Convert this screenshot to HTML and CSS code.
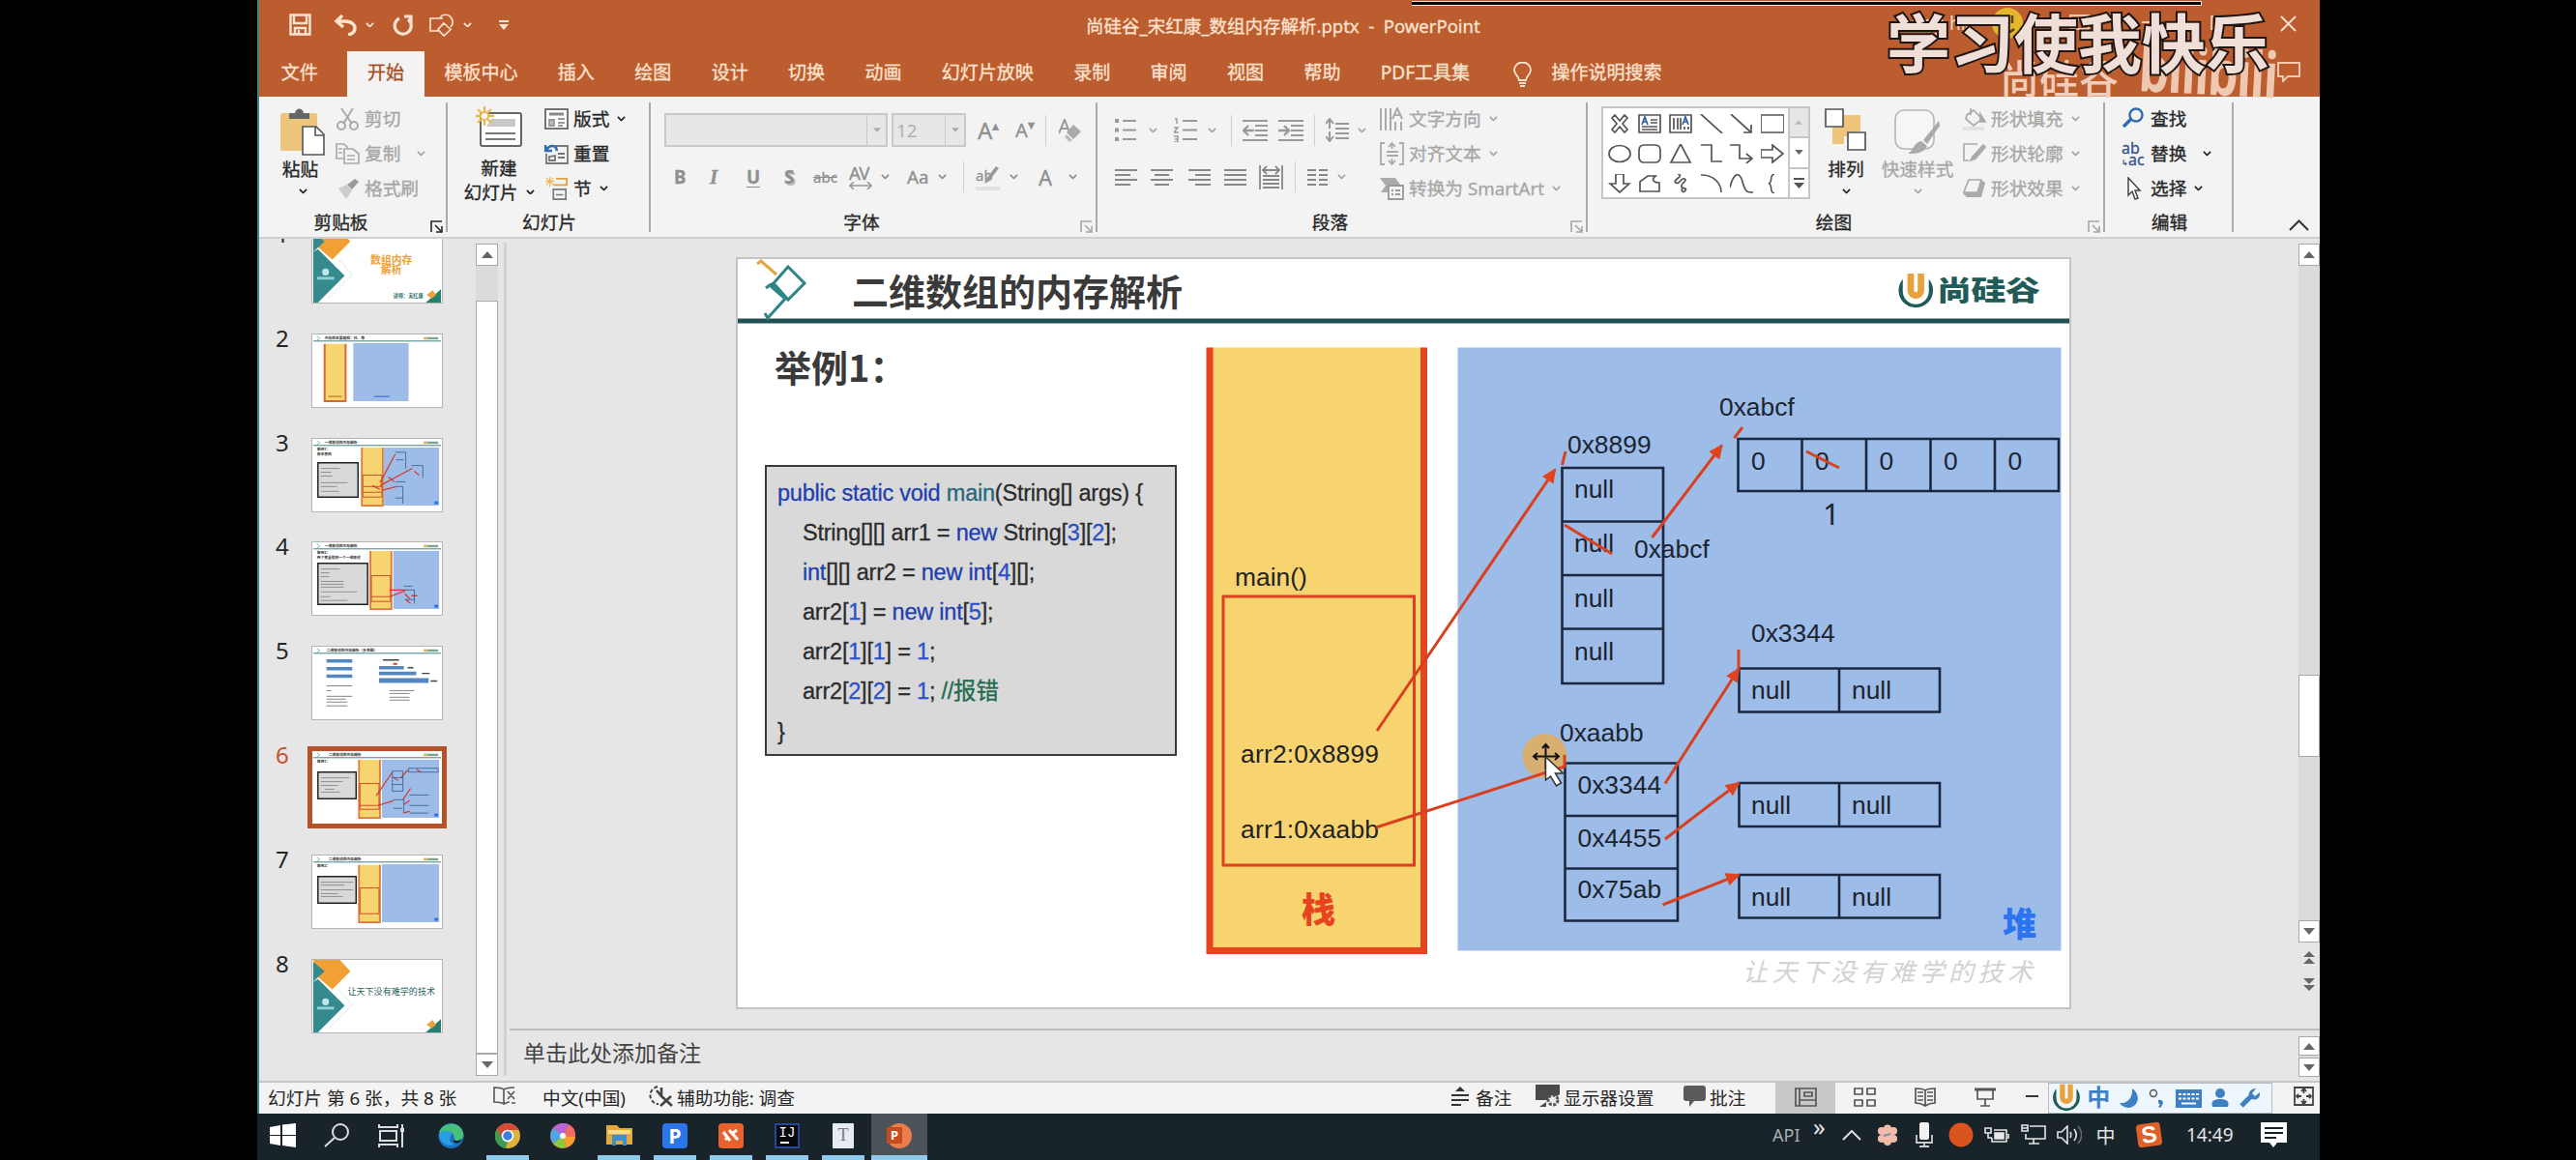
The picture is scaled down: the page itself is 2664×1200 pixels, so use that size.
FILE: index.html
```html
<!DOCTYPE html>
<html lang="zh-CN">
<head>
  <meta charset="UTF-8" />
  <title>尚硅谷_宋红康_数组内存解析.pptx - PowerPoint</title>
  <link rel="stylesheet" href="styles.css">
</head>
<body>
  <!-- shared symbols -->
  <svg class="defs" width="0" height="0">
    <symbol id="chev" viewBox="0 0 10 6"><path d="M1 1l4 4 4-4" fill="none" stroke="currentColor" stroke-width="2"/></symbol>
    <symbol id="launch" viewBox="0 0 13 13"><path d="M1 12V1h11M5 5l6 6M12 6v6H6" fill="none" stroke="currentColor" stroke-width="1.6"/></symbol>
    <symbol id="up" viewBox="0 0 12 7"><path d="M0 7l6-7 6 7z" fill="#666"/></symbol>
    <symbol id="down" viewBox="0 0 12 7"><path d="M0 0l6 7 6-7z" fill="#666"/></symbol>
    <symbol id="ulogo" viewBox="0 0 40 40">
      <path d="M6 7A18.5 18.5 0 1 0 34 7V20a14 14 0 0 1-28 0z" fill="#215b58"/>
      <path d="M11 1v18a9 9 0 0 0 18 0V1h-7v18a2 2 0 0 1-4 0V1z" fill="#e9a23b"/>
    </symbol>
    <symbol id="thead" viewBox="0 0 134 8">
      <path d="M4 2l3 2-3 2" fill="none" stroke="#7cc0c0"/>
      <path d="M0 6.9H134" stroke="#3f7f80" stroke-width="1"/>
      <path d="M116 4h15" stroke="#79a58c" stroke-width="2.4"/><path d="M116 4h4" stroke="#dcb75f" stroke-width="2.4"/>
    </symbol>
    <symbol id="cover" viewBox="0 0 134 76">
      <path d="M0 0H28L39 12 20 31 5 18z" fill="#f0a035"/>
      <path d="M0 2L12 12 0 23zM0 23L5 20 33 48 5 76H0z" fill="#348a8c"/>
      <path d="M27 31L41 47 16 72" fill="none" stroke="#cfe6e4" stroke-width=".8"/>
      <circle cx="13" cy="44" r="3.6" fill="#bfe6ea"/><path d="M4 50.5h18" stroke="#8fd0d6" stroke-width="3"/>
      <path d="M118 76L134 62V76z" fill="#23806f"/><path d="M119 68l6-5 4 5-5 4z" fill="#e9a23b"/>
    </symbol>
  </svg>

  <div class="screen">
    <div class="window">

      <header class="titlebar">
        <div class="quick">
          <svg class="q-save" width="23" height="23" viewBox="0 0 23 23" fill="none" stroke="#fde3cf" stroke-width="2.4"><path d="M1.5 1.5h20v20h-20zM5 2v8h13V2M6 21v-6h11v6M10 17v4"/></svg>
          <svg width="24" height="22" viewBox="0 0 24 22" fill="none" stroke="#fde3cf" stroke-width="3.4"><path d="M9 1L3 7l7 6M3 7h9c7 0 10 4 10 7s-2 6-7 7"/></svg>
          <svg class="chev"><use href="#chev"/></svg>
          <svg width="22" height="22" viewBox="0 0 22 22" fill="none" stroke="#fde3cf" stroke-width="3.2"><path d="M7 4a8.500 8.500 0 1 0 9 1M12 2h7v8" /></svg>
          <svg width="26" height="24" viewBox="0 0 26 24" fill="none" stroke="#fde3cf" stroke-width="1.7"><path d="M10 18H1V5h13M11 5c2-5 9-5 12 0 2 4 1 7-1 9M15 10l7 6.500-7 6.500-6-6.500z"/></svg>
          <svg class="chev"><use href="#chev"/></svg>
          <svg width="10" height="10" viewBox="0 0 10 10"><path d="M0 1h10" stroke="#fde3cf" stroke-width="2"/><path d="M0 4h10l-5 6z" fill="#fde3cf"/></svg>
        </div>
        <div class="doc-name">尚硅谷_宋红康_数组内存解析.pptx&nbsp; -&nbsp; PowerPoint</div>
        <svg class="close" width="17" height="17" viewBox="0 0 17 17"><path d="M1 1l15 15M16 1L1 16" stroke="#fde3cf" stroke-width="1.800"/></svg>
      </header>

      <nav class="tabs">
        <a class="file">文件</a>
        <a class="active">开始</a>
        <a>模板中心</a>
        <a>插入</a>
        <a>绘图</a>
        <a>设计</a>
        <a>切换</a>
        <a>动画</a>
        <a>幻灯片放映</a>
        <a>录制</a>
        <a>审阅</a>
        <a>视图</a>
        <a>帮助</a>
        <a>PDF工具集</a>
        <svg class="bulb" width="19" height="26" viewBox="0 0 19 26" fill="none" stroke="#fde3cf" stroke-width="1.800"><path d="M6 19c0-4-5-6-5-10.500a8.500 8 0 0 1 17 0C18 13 13 15 13 19zM6 22h7M7 25h5"/></svg>
        <a class="tell">操作说明搜索</a>
        <svg class="note" width="24" height="21" viewBox="0 0 24 21" fill="none" stroke="#f6c8ac" stroke-width="2"><path d="M1 1h22v14H11l-5 5v-5H1z"/></svg>
      </nav>

      <div class="ribbon">
        <section class="group clipboard">
          <div class="tools">
            <div class="big">
              <svg width="46" height="50" viewBox="0 0 46 50"><rect x="0" y="5" width="38" height="39" rx="2" fill="#edc67c"/><path d="M9 11V5h6c1-6 8-6 9 0h6v6z" fill="#666"/><path d="M23 19h14l8 8v21H23z" fill="#fff" stroke="#555" stroke-width="1.600"/><path d="M36 19v9h9" fill="none" stroke="#555" stroke-width="1.600"/></svg>
              <span>粘贴</span>
              <svg class="chev"><use href="#chev"/></svg>
            </div>
            <div class="rows off">
              <div><svg class="ico" viewBox="0 0 25 24" fill="none" stroke="#aaa" stroke-width="2"><path d="M6 1l11 16M18 1L8 17"/><circle cx="6" cy="19" r="4"/><circle cx="19" cy="19" r="4"/></svg><span>剪切</span></div>
              <div><svg class="ico" viewBox="0 0 25 24" fill="none" stroke="#aaa" stroke-width="1.700"><path d="M10 17H1V2h8l3 3v2M9 7h9l6 5v10H9zM3 7h4M3 11h4M12 14h8M12 18h8"/></svg><span>复制</span><svg class="chev far"><use href="#chev"/></svg></div>
              <div><svg class="ico" viewBox="0 0 25 24"><path d="M3 12l8-4 6 6-6 9z" fill="#ccc"/><path d="M12 8l8-6 4 3-7 8z" fill="#999"/></svg><span>格式刷</span></div>
            </div>
          </div>
          <footer><span>剪贴板</span><svg class="launch"><use href="#launch"/></svg></footer>
        </section>

        <section class="group slides">
          <div class="tools">
            <div class="big">
              <svg width="48" height="43" viewBox="0 0 48 43"><rect x="5" y="7" width="42" height="34" rx="2" fill="#fff" stroke="#666" stroke-width="2"/><path d="M16 13h25v8H11" fill="#c8c8c8"/><path d="M10 28h31M10 34h31" stroke="#777" stroke-width="1.800"/><path d="M9 0v20M0 10h19M2 3l14 14M16 3L2 17" stroke="#e9b858" stroke-width="2.400"/><circle cx="9" cy="10" r="4" fill="#fff" stroke="#e9b858" stroke-width="2"/></svg>
              <span>新建</span>
              <span class="two">幻灯片<svg class="chev"><use href="#chev"/></svg></span>
            </div>
            <div class="rows">
              <div><svg class="ico" viewBox="0 0 25 24" fill="none" stroke="#666" stroke-width="1.800"><rect x="1" y="2" width="23" height="20" fill="#fff"/><path d="M5 7h15" stroke="#888" stroke-width="3"/><path d="M5 13h5v6H5z" fill="#bbb" stroke="#999"/><path d="M14 12h7M14 16h7M14 19h5" stroke="#999"/></svg><span>版式</span><svg class="chev"><use href="#chev"/></svg></div>
              <div><svg class="ico" viewBox="0 0 25 24" fill="none" stroke="#777" stroke-width="1.800"><path d="M11 4h13v18H2V12M5 15v4h6v-5zM14 12h7M14 16h7"/><path d="M1 3v6h7M2 8C6 2 12 3 13 9" stroke="#2e6db5" stroke-width="2.600"/></svg><span>重置</span></div>
              <div><svg class="ico" viewBox="0 0 25 26" fill="none" stroke="#777" stroke-width="1.800"><path d="M9 14h14v11H9zM12 20h8"/><path d="M12 2h12v7H9" stroke="#e0a040" stroke-width="2"/><path d="M5 0v11M0 5h10M1 1l8 8M9 1L1 9" stroke="#e9b858" stroke-width="1.200"/></svg><span>节</span><svg class="chev"><use href="#chev"/></svg></div>
            </div>
          </div>
          <footer><span>幻灯片</span></footer>
        </section>

        <section class="group font off">
          <div class="tools">
            <div class="row font-row1">
              <div class="combo name"><i><svg width="8" height="5" viewBox="0 0 12 7"><path d="M0 0h12l-6 7z" fill="#aaa"/></svg></i></div>
              <div class="combo size">12<i><svg width="8" height="5" viewBox="0 0 12 7"><path d="M0 0h12l-6 7z" fill="#aaa"/></svg></i></div>
              <span class="grow">A<sup>▴</sup></span>
              <span class="shrink">A<sup>▾</sup></span>
              <b class="bar"></b>
              <svg width="23" height="24" viewBox="0 0 23 24"><path d="M0 15L6 1l5 13M2 10h7" fill="none" stroke="#999" stroke-width="2"/><path d="M15 6l8 7-8 8-7-7z" fill="#aaa"/><path d="M8 16l6 6-3 2-5-5z" fill="#bbb"/></svg>
            </div>
            <div class="row font-row2">
              <span class="bold">B</span>
              <span class="ital">I</span>
              <span class="und">U</span>
              <span class="shad">S</span>
              <span class="strike">abc</span>
              <span class="av">AV<svg width="24" height="8" viewBox="0 0 24 8" fill="none" stroke="#999" stroke-width="1.600"><path d="M1 4h22M5 0L1 4l4 4M19 0l4 4-4 4"/></svg></span>
              <svg class="chev"><use href="#chev"/></svg>
              <span class="aa">Aa</span>
              <svg class="chev"><use href="#chev"/></svg>
              <b class="bar"></b>
              <span class="mark">ab<svg width="25" height="26" viewBox="0 0 25 26"><path d="M24 2L13 16l-4 2 2-5L21 0z" fill="#999"/><path d="M0 21h25v4H0z" fill="#e2e2e2"/></svg></span>
              <svg class="chev"><use href="#chev"/></svg>
              <span class="fcol">A</span>
              <svg class="chev"><use href="#chev"/></svg>
            </div>
          </div>
          <footer><span>字体</span><svg class="launch"><use href="#launch"/></svg></footer>
        </section>

        <section class="group para off">
          <div class="tools">
            <div class="para-left">
              <div class="row para-row1">
                <svg width="22" height="25" viewBox="0 0 22 25" stroke="#999" stroke-width="2"><path d="M8 3h14M8 12.500h14M8 22h14"/><path d="M0 3h4M0 12.500h4M0 22h4" stroke-width="4"/></svg>
                <svg class="chev"><use href="#chev"/></svg>
                <svg width="24" height="25" viewBox="0 0 24 25" stroke="#999" stroke-width="2" fill="none"><path d="M9 3h15M9 12.500h15M9 22h15"/><path d="M1 1h2v5M0 10h4l-4 5h5M0 19h4v6H0M1 22h3" stroke-width="1.400"/></svg>
                <svg class="chev"><use href="#chev"/></svg>
                <b class="bar"></b>
                <svg width="26" height="22" viewBox="0 0 26 22" stroke="#999" stroke-width="1.900" fill="none"><path d="M0 1h26M13 6h13M13 11h13M13 16h13M0 21h26"/><path d="M1 11h11M6 6l-5 5 5 5" stroke-width="2.400"/></svg>
                <svg width="26" height="22" viewBox="0 0 26 22" stroke="#999" stroke-width="1.900" fill="none"><path d="M0 1h26M13 6h13M13 11h13M13 16h13M0 21h26"/><path d="M0 11h10M6 6l5 5-5 5" stroke-width="2.400"/></svg>
                <b class="bar"></b>
                <svg width="24" height="25" viewBox="0 0 24 25" stroke="#999" stroke-width="2" fill="none"><path d="M10 6h14M10 11h14M10 16h14M10 21h14M4 2v9M0 6l4-5 4 5M4 14v9M0 19l4 5 4-5"/></svg>
                <svg class="chev"><use href="#chev"/></svg>
              </div>
              <div class="row para-row2">
                <svg width="23" height="17" viewBox="0 0 23 17" stroke="#888" stroke-width="2"><path d="M0 1h23M0 6h16M0 11h23M0 16h16"/></svg>
                <svg width="23" height="17" viewBox="0 0 23 17" stroke="#888" stroke-width="2"><path d="M0 1h23M4 6h15M0 11h23M4 16h15"/></svg>
                <svg width="23" height="17" viewBox="0 0 23 17" stroke="#888" stroke-width="2"><path d="M0 1h23M7 6h16M0 11h23M7 16h16"/></svg>
                <svg width="23" height="17" viewBox="0 0 23 17" stroke="#888" stroke-width="2"><path d="M0 1h23M0 6h23M0 11h23M0 16h23"/></svg>
                <svg width="25" height="25" viewBox="0 0 25 25" stroke="#888" stroke-width="1.800" fill="none"><path d="M1 0v25M24 0v25M5 5h15M8 1L4 5l4 4M17 1l4 4-4 4M4 11h17M4 15h17M4 19h17M4 23h17"/></svg>
                <b class="bar"></b>
                <svg width="21" height="17" viewBox="0 0 21 17" stroke="#888" stroke-width="2"><path d="M0 1h9M0 6h9M0 11h9M0 16h9M12 1h9M12 6h9M12 11h9M12 16h9"/></svg>
                <svg class="chev"><use href="#chev"/></svg>
              </div>
            </div>
            <div class="rows">
              <div><svg class="ico" viewBox="0 0 25 24" stroke="#aaa" stroke-width="2" fill="none"><path d="M1 1v23M6 1v23M11 1v23M16 15v9M22 15v9"/><path d="M13 12l5-11 5 11M15 8h6"/></svg><span>文字方向</span><svg class="chev"><use href="#chev"/></svg></div>
              <div><svg class="ico" viewBox="0 0 25 24" stroke="#aaa" stroke-width="1.800" fill="none"><path d="M5 1H1v22h4M20 1h4v22h-4M7 10h12M7 14h12M12.500 1v6M9 5l3.500-4L16 5M12.500 17v6M9 19l3.500 4 3.500-4"/></svg><span>对齐文本</span><svg class="chev"><use href="#chev"/></svg></div>
              <div><svg class="ico" viewBox="0 0 25 24"><path d="M0 1h16l5 7H11v8H1l5-7z" fill="#aaa"/><path d="M9 9h15v14H9z" fill="#f3f3f3" stroke="#999" stroke-width="1.800"/><path d="M12 14h2M16 14h5M12 18h2M16 18h5" stroke="#999" stroke-width="2"/></svg><span>转换为 SmartArt</span><svg class="chev"><use href="#chev"/></svg></div>
            </div>
          </div>
          <footer><span>段落</span><svg class="launch"><use href="#launch"/></svg></footer>
        </section>

        <section class="group draw">
          <div class="tools">
            <div class="gallery">
              <div class="shapes">
                <svg viewBox="0 0 24 20"><path d="M4 4l3-3 5 6 5-6 3 3-5 6 5 6-3 3-5-6-5 6-3-3 5-6z"/></svg>
                <svg viewBox="0 0 24 20"><path d="M1 1h22v18H1zM13 6h7M13 9h7M4 13h16M4 16h16"/><path d="M4 11L7 3l3 8M5 8h4" stroke="#2b5fa8"/></svg>
                <svg viewBox="0 0 24 20"><path d="M1 1h22v18H1zM5 4v12M9 4v12M12 4v12M16 13v3M20 13v3"/><path d="M14 11l3-8 3 8M15 8h4" stroke="#2b5fa8"/></svg>
                <svg viewBox="0 0 24 20"><path d="M1 0l22 20"/></svg>
                <svg viewBox="0 0 24 20"><path d="M1 0l21 19M22 11v8h-8"/></svg>
                <svg viewBox="0 0 24 20"><path d="M0 1h24v18H0z"/></svg>
                <svg viewBox="0 0 24 20"><ellipse cx="12" cy="10" rx="11" ry="8.500"/></svg>
                <svg viewBox="0 0 24 20"><rect x="1" y="1" width="22" height="18" rx="5"/></svg>
                <svg viewBox="0 0 24 20"><path d="M12 0l10 19H2z"/></svg>
                <svg viewBox="0 0 24 20"><path d="M1 1h11v17h11"/></svg>
                <svg viewBox="0 0 24 20"><path d="M0 1h10v14h12M17 10l6 5-6 5"/></svg>
                <svg viewBox="0 0 24 20"><path d="M0 6h12V1l11 9-11 9v-5H0z"/></svg>
                <svg viewBox="0 0 24 20"><path d="M8 0h8v10h6L12 19 2 10h6z"/></svg>
                <svg viewBox="0 0 24 20"><path d="M2 18V8l8-6h8c-6 5 0 7 4 7v9z"/></svg>
                <svg viewBox="0 0 24 20"><path d="M9 0c8 2-6 6-2 9s5-6 9-4-5 5-3 8 6 1 4 4-5 1-3-3"/></svg>
                <svg viewBox="0 0 24 20"><path d="M1 1c14 0 21 9 21 18"/></svg>
                <svg viewBox="0 0 24 20"><path d="M0 14C4-2 10-3 13 8s5 11 11 11"/></svg>
                <svg viewBox="0 0 24 20"><path d="M14 0c-6 1-1 9-6 10 5 1 0 9 6 10"/></svg>
              </div>
              <div class="steps">
                <i class="dim"><svg width="8" height="5" viewBox="0 0 12 7"><path d="M0 7l6-7 6 7z" fill="#bbb"/></svg></i>
                <i><svg width="9" height="5"><use href="#down"/></svg></i>
                <i><svg width="11" height="11" viewBox="0 0 11 11"><path d="M0 1h11" stroke="#555" stroke-width="2"/><path d="M0 5h11l-5.500 6z" fill="#555"/></svg></i>
              </div>
            </div>
            <div class="big arrange">
              <svg width="44" height="45" viewBox="0 0 44 45"><path d="M8 21V7h29v22H20v8H8z" fill="#edc67c"/><path d="M1 1h18v18H1zM24 25h18v18H24z" fill="#fff" stroke="#555" stroke-width="1.700"/></svg>
              <span>排列</span>
              <svg class="chev"><use href="#chev"/></svg>
            </div>
            <div class="big styles off">
              <svg width="48" height="47" viewBox="0 0 48 47"><rect x="1" y="1" width="40" height="40" rx="9" fill="#f6f6f6" stroke="#b5b5b5" stroke-width="1.600"/><path d="M46 12L30 32l4 4 13-19z" fill="#aaa"/><path d="M28 33l6 5c-4 8-12 8-20 8 6-3 6-12 14-13z" fill="#aaa"/></svg>
              <span>快速样式</span>
              <svg class="chev"><use href="#chev"/></svg>
            </div>
            <div class="rows off">
              <div><svg class="ico" viewBox="0 0 25 24" fill="none" stroke="#aaa" stroke-width="1.700"><path d="M9 1v7M5 8l7-5 9 9-9 7-8-7z"/><path d="M19 7l5 8h-5z" fill="#aaa"/><path d="M1 22h22" stroke="#e2e2e2" stroke-width="4"/></svg><span>形状填充</span><svg class="chev"><use href="#chev"/></svg></div>
              <div><svg class="ico" viewBox="0 0 25 24" fill="none" stroke="#aaa" stroke-width="1.700"><path d="M16 2H2v17h5"/><path d="M22 3L11 15l-2 4 5-2L24 5z" fill="#aaa"/></svg><span>形状轮廓</span><svg class="chev"><use href="#chev"/></svg></div>
              <div><svg class="ico" viewBox="0 0 25 24"><path d="M6 3h14l4 3-4 15H5l-4-4z" fill="#aaa"/><path d="M7 3h13l-4 13H2z" fill="#f3f3f3" stroke="#aaa" stroke-width="1.500"/></svg><span>形状效果</span><svg class="chev"><use href="#chev"/></svg></div>
            </div>
          </div>
          <footer><span>绘图</span><svg class="launch off"><use href="#launch"/></svg></footer>
        </section>

        <section class="group edit">
          <div class="tools">
            <div class="rows">
              <div><svg class="ico" viewBox="0 0 25 24" fill="none" stroke="#2e6db5" stroke-width="2.400"><circle cx="15" cy="8" r="6.500"/><path d="M10 12L2 20" stroke-width="3.400"/></svg><span>查找</span></div>
              <div><span class="ico abac">ab<br><em>↳</em>ac</span><span>替换</span><svg class="chev wide"><use href="#chev"/></svg></div>
              <div><svg class="ico" viewBox="0 0 25 24"><path d="M7 1v18l4-4 3 8 3-1-3-8h5z" fill="#fff" stroke="#444" stroke-width="1.500"/></svg><span>选择</span><svg class="chev"><use href="#chev"/></svg></div>
            </div>
          </div>
          <footer><span>编辑</span></footer>
        </section>
        <div class="collapse"><svg width="21" height="12" viewBox="0 0 21 12" fill="none" stroke="#333" stroke-width="2"><path d="M1 11l9.500-9.500L20 11"/></svg></div>
      </div>

      <div class="main">
        <aside class="outline">
          <div class="item"><span>1</span>
            <svg class="thumb" viewBox="0 0 134 76"><use href="#cover" width="134" height="76"/><text class="t-cover" x="60" y="35">数组内存</text><text class="t-cover" x="71" y="46">解析</text><text class="t-author" x="84" y="71">讲师：宋红康</text></svg></div>
          <div class="item"><span>2</span>
            <svg class="thumb" viewBox="0 0 134 76"><use href="#thead" width="134" height="8"/><text class="t-head" x="12" y="5.500">内存的主要结构：栈、堆</text>
              <path d="M12 10V70H34V10" fill="#f7d470" stroke="#cf6a3c" stroke-width="2"/><path d="M42 9H100V70H42z" fill="#9dbce8"/><path d="M16 65h14" stroke="#c98a3c" stroke-width="1.500"/><path d="M64 65h16" stroke="#4a7de0" stroke-width="1.500"/></svg></div>
          <div class="item"><span>3</span>
            <svg class="thumb" viewBox="0 0 134 76"><use href="#thead" width="134" height="8"/><text class="t-head" x="12" y="5.500">一维数组的内存解析</text><text class="t-head" x="4" y="12">举例1：</text><text class="t-head" x="4" y="17">基本使用</text>
              <path d="M5 25H47V61H5z" fill="#d9d9d9" stroke="#222" stroke-width="1.500"/><path d="M8 31h20M8 35h11M8 39h12M8 46h28M8 50h17M8 55h19" stroke="#888" stroke-width=".9"/>
              <path d="M74 9H132V70H74z" fill="#9dbce8"/><path d="M51 9V70H73V9" fill="#f7d470" stroke="#e07838" stroke-width="1.800"/><path d="M52 38h20v23H52zM52 50h20M52 56h20" fill="none" stroke="#c8502a"/>
              <path d="M70 46L86 16M70 49L104 31M72 54l15-4M62 49l8 4M79 40l6 5M106 34l5 4" stroke="#d8382a" stroke-width="1.200"/><path d="M86 14h11v17M87 22h8M103 28h12v13M87 50h7v18M86 45h11M86 62h8" fill="none" stroke="#34598a" stroke-width=".8"/><path d="M127 67h4" stroke="#2b6ff0" stroke-width="3"/></svg></div>
          <div class="item"><span>4</span>
            <svg class="thumb" viewBox="0 0 134 76"><use href="#thead" width="134" height="8"/><text class="t-head" x="12" y="5.500">一维数组的内存解析</text><text class="t-head" x="4" y="12">举例2：</text><text class="t-head" x="4" y="17">两个变量指向一个一维数组</text>
              <path d="M5 22H57V65H5z" fill="#d9d9d9" stroke="#222" stroke-width="1.500"/><path d="M8 28h20M8 32h9M8 36h9M8 41h24M8 44h24M8 47h24M8 52h38M8 57h10M8 61h28" stroke="#888" stroke-width=".9"/>
              <path d="M84 9H132V70H84z" fill="#9dbce8"/><path d="M60 9V70H82V9" fill="#f7d470" stroke="#e07838" stroke-width="1.800"/><path d="M61 35h20v27H61zM61 57h20" fill="none" stroke="#c8502a"/>
              <path d="M80 50h17M80 57l16-6M96 54l5 5M97 60l5 4M103 56h6" stroke="#d8382a" stroke-width="1.300"/><path d="M95 46h9M96 50h10v14M96 60h10" fill="none" stroke="#34598a" stroke-width=".8"/><path d="M127 67h4" stroke="#2b6ff0" stroke-width="3"/></svg></div>
          <div class="item"><span>5</span>
            <svg class="thumb" viewBox="0 0 134 76"><use href="#thead" width="134" height="8"/><text class="t-head" x="14" y="5.500">二维数组的内存解析（补充图）</text>
              <path d="M14 15h27M14 23h27M14 31h27M69 22h26M69 28h39" stroke="#5487bf" stroke-width="3.600"/><path d="M69 35.500h52" stroke="#5487bf" stroke-width="5"/><path d="M73 14h17M99 22h6M114 28h8M123 36h7" stroke="#444" stroke-width="1.500"/><path d="M84 18h4" stroke="#e03020" stroke-width="2"/><path d="M14 41h27M14 46h5M14 52h27M14 55h20M14 58h22M14 62h22M80 46h26M80 49h21M80 53h21M80 56h21" stroke="#777" stroke-width=".9"/></svg></div>
          <div class="item current"><span>6</span>
            <svg class="thumb" viewBox="0 0 134 76"><use href="#thead" width="134" height="8"/><text class="t-head" x="16" y="5.500">二维数组的内存解析</text><text class="t-head" x="4" y="12">举例1：</text>
              <path d="M5 22H45V50H5z" fill="#d9d9d9" stroke="#222" stroke-width="1.500"/><path d="M8 28h30M8 32h23M8 36h18M12 40h10M8 43h20" stroke="#888" stroke-width=".9"/>
              <path d="M72 9H132V70H72z" fill="#9dbce8"/><path d="M48 9V70H70V9" fill="#f7d470" stroke="#e07838" stroke-width="1.800"/><path d="M49 34h20v27H49zM49 57h20" fill="none" stroke="#c8502a"/>
              <path d="M66 47L83 22M68 57l16-5M84 27l5 4M92 28l7-8M94 51l8-12M95 56l6-4M95 65l6-2M108 19l5 3" stroke="#d8382a" stroke-width="1.200"/><path d="M83 21h11v21H83zM83 28h11M83 35h11M100 18h31v4h-31zM84 51h11v14M84 60h9M101 46h20M101 57h20M101 65h20" fill="none" stroke="#34598a" stroke-width=".8"/><path d="M127 67h4" stroke="#2b6ff0" stroke-width="3"/></svg></div>
          <div class="item"><span>7</span>
            <svg class="thumb" viewBox="0 0 134 76"><use href="#thead" width="134" height="8"/><text class="t-head" x="16" y="5.500">二维数组的内存解析</text><text class="t-head" x="4" y="12">举例2：</text>
              <path d="M5 22H45V50H5z" fill="#d9d9d9" stroke="#222" stroke-width="1.500"/><path d="M8 28h34M8 31h25M8 36h34M8 40h18M8 43h23" stroke="#888" stroke-width=".9"/>
              <path d="M72 9H132V70H72z" fill="#9dbce8"/><path d="M48 10V70H70V10" fill="#f7d470" stroke="#e07838" stroke-width="1.800"/><path d="M49 34h20v27H49z" fill="none" stroke="#c8502a"/><path d="M127 67h4" stroke="#2b6ff0" stroke-width="3"/></svg></div>
          <div class="item"><span>8</span>
            <svg class="thumb" viewBox="0 0 134 76"><use href="#cover" width="134" height="76"/><text class="t-end" x="36" y="36">让天下没有难学的技术</text></svg></div>
        </aside>
        <div class="vscroll outline-scroll">
          <i><svg width="12" height="7"><use href="#up"/></svg></i>
          <b></b>
          <i><svg width="12" height="7"><use href="#down"/></svg></i>
        </div>
        <div class="splitter"></div>

        <div class="editor">
          <div class="stage">
            <div class="slide">
              <svg class="diagram" viewBox="763 268 1377 774">
                <defs>
                  <marker id="head" markerUnits="userSpaceOnUse" markerWidth="16" markerHeight="14" refX="13" refY="7" orient="auto"><path d="M0 0l15 7-15 7z" fill="#e0431f"/></marker>
                </defs>
                <!-- header -->
                <path d="M763 332H2140" stroke="#1f5152" stroke-width="5"/>
                <path d="M783 273l4-3 16 14" fill="none" stroke="#e5a443" stroke-width="3"/>
                <path d="M815 276l17 17-17 17-15-17zM792 298l4-3 16 14-19 21M797 293l16 15M791 324l4 7" fill="none" stroke="#2e8585" stroke-width="3"/>
                <text class="s-title" x="881" y="316">二维数组的内存解析</text>
                <text class="s-title" x="801" y="395">举例1：</text>
                <use href="#ulogo" x="1962" y="282" width="38.500" height="38.500"/>
                <text class="s-brand" transform="translate(2003 311) scale(1 .8)" textLength="107">尚硅谷</text>

                <!-- stack -->
                <path d="M1251 359.500H1473V983H1251z" fill="#f7d470"/>
                <path d="M1251 359.500V983.500H1472.500V359.500" fill="none" stroke="#e8431f" stroke-width="7"/>
                <rect x="1265" y="617" width="197.500" height="278" fill="none" stroke="#e0401f" stroke-width="3"/>
                <text class="s-text" x="1277" y="606">main()</text>
                <text class="s-text" x="1283" y="788.500" textLength="143">arr2:0x8899</text>
                <text class="s-text" x="1283" y="867" textLength="143">arr1:0xaabb</text>
                <text class="s-zone stack" x="1346" y="954">栈</text>

                <!-- heap -->
                <rect x="1507.500" y="359.500" width="624" height="624" fill="#9dbce8"/>
                <g class="grid">
                  <path d="M1615.500 484H1720V707H1615.500zM1615 539.500H1720M1615 595H1720M1615 650.500H1720"/>
                  <path d="M1797.500 454H2129V508H1797.500zM1863.500 454V508M1930 454V508M1996.500 454V508M2063 454V508"/>
                  <path d="M1618.500 789.500H1735V952.500H1618.500zM1618 844H1735M1618 898.500H1735"/>
                  <path d="M1798.500 691.500H2006V736.500H1798.500zM1902 691V736"/>
                  <path d="M1798.500 810H2006V855H1798.500zM1902 810V855"/>
                  <path d="M1798.500 905H2006V949.500H1798.500zM1902 905V949"/>
                </g>
                <g class="s-text heap-text">
                  <text x="1621" y="468.500">0x8899</text>
                  <text x="1628" y="515">null</text><text x="1628" y="571">null</text><text x="1628" y="628">null</text><text x="1628" y="683">null</text>
                  <text x="1690" y="576.500">0xabcf</text>
                  <text x="1778" y="429.500">0xabcf</text>
                  <text x="1811" y="486">0</text><text x="1877" y="486">0</text><text x="1943.500" y="486">0</text><text x="2010" y="486">0</text><text x="2076.500" y="486">0</text>
                  <text class="one" x="1885" y="543">1</text>
                  <text x="1811" y="664">0x3344</text>
                  <text x="1811" y="723">null</text><text x="1915" y="723">null</text>
                  <text x="1811" y="841.500">null</text><text x="1915" y="841.500">null</text>
                  <text x="1811" y="937">null</text><text x="1915" y="937">null</text>
                  <text x="1613" y="767">0xaabb</text>
                  <text x="1631.500" y="821">0x3344</text><text x="1631.500" y="875.500">0x4455</text><text x="1631.500" y="929">0x75ab</text>
                </g>
                <text class="s-zone heap" x="2071" y="969">堆</text>
                <text class="s-motto" x="1802" y="1015" textLength="300">让天下没有难学的技术</text>

                <!-- mouse highlight -->
                <circle cx="1597.500" cy="782" r="23" fill="#e2ae5c" fill-opacity=".85"/>
                <!-- references -->
                <g class="refs">
                  <path class="arrow" d="M1424 756L1608 486"/>
                  <path class="arrow" d="M1708.500 556L1780.500 461"/>
                  <path class="arrow" d="M1722 810.500L1798 692"/>
                  <path class="arrow" d="M1722 868L1798 810"/>
                  <path class="arrow" d="M1719.500 936L1798 905"/>
                  <path d="M1423 856L1618 793V781M1619 467L1615.500 481M1802 442L1793.500 453M1798 672V692M1618 543L1667 573M1868 467L1902 484"/>
                </g>
                <path d="M1587 782.500H1611M1598.500 771V796M1595 774l3.500-4 3.500 4M1590 779l-4 3.500 4 3.500M1608 779l4 3.500-4 3.500" fill="none" stroke="#111" stroke-width="2"/>
                <path d="M1598.500 783v24l5-4 6 10 5-3-6-10h8z" fill="#fff" stroke="#333" stroke-width="1.500"/>
              </svg>
              <div class="code"><u>public static void</u> <em>main</em>(String[] args) {
<s></s>String[][] arr1 = <u>new</u> String[<q>3</q>][<q>2</q>];
<s></s><u>int</u>[][] arr2 = <u>new int</u>[<q>4</q>][];
<s></s>arr2[<q>1</q>] = <u>new int</u>[<q>5</q>];
<s></s>arr2[<q>1</q>][<q>1</q>] = <q>1</q>;
<s></s>arr2[<q>2</q>][<q>2</q>] = <q>1</q>; <cite>//报错</cite>
}</div>
            </div>
            <div class="vscroll stage-scroll">
              <i><svg width="12" height="7"><use href="#up"/></svg></i>
              <span><b></b></span>
              <i><svg width="12" height="7"><use href="#down"/></svg></i>
              <em><svg width="12" height="13" viewBox="0 0 12 13"><path d="M0 6l6-6 6 6zM0 13l6-6 6 6z" fill="#666"/></svg></em>
              <em><svg width="12" height="13" viewBox="0 0 12 13"><path d="M0 0l6 6 6-6zM0 7l6 6 6-6z" fill="#666"/></svg></em>
            </div>
          </div>
          <div class="notes">
            <p>单击此处添加备注</p>
            <div class="vscroll">
              <i><svg width="12" height="7"><use href="#up"/></svg></i>
              <i><svg width="12" height="7"><use href="#down"/></svg></i>
            </div>
          </div>
        </div>
      </div>

      <div class="status">
        <div class="st-left">
          <span class="st-page">幻灯片 第 6 张，共 8 张</span>
          <svg width="24" height="20" viewBox="0 0 24 20" fill="none" stroke="#555" stroke-width="1.600"><path d="M11 18V3C8 1 4 1 1 1v15c3 0 7 0 10 2 2-1 4-2 6-2M11 3c3-2 7-2 11-2M15 5l7 8M22 5l-7 8M19 17h4"/></svg>
          <span class="st-lang">中文(中国)</span>
          <svg width="26" height="24" viewBox="0 0 26 24" fill="none" stroke="#444" stroke-width="2"><path d="M9 2C3 4 0 9 2 14s5 6 8 6" stroke-dasharray="4 2"/><path d="M8 6l5 6M13 3v8M12 11l12 11M23 12L12 22" stroke-width="2.600"/></svg>
          <span class="st-a11y">辅助功能: 调查</span>
        </div>
        <div class="st-right">
          <svg width="20" height="20" viewBox="0 0 20 20"><path d="M10 0l5 5H5z" fill="#333"/><path d="M1 9h18M1 14h18M1 19h10" stroke="#333" stroke-width="2"/></svg>
          <span>备注</span>
          <svg width="26" height="24" viewBox="0 0 26 24"><path d="M0 0h25v10l-9 6H0z" fill="#4a4a4a"/><path d="M4 23l7-5v5z" fill="#4a4a4a"/><circle cx="18" cy="16" r="5" fill="#eee" stroke="#555" stroke-width="3" stroke-dasharray="3 1.500"/></svg>
          <span>显示器设置</span>
          <svg width="23" height="22" viewBox="0 0 23 22"><path d="M3 0h17c2 0 3 1 3 3v10c0 2-1 3-3 3h-9l-5 6v-6H3c-2 0-3-1-3-3V3c0-2 1-3 3-3z" fill="#5a5a5a"/></svg>
          <span>批注</span>
        </div>
        <div class="views">
          <i class="on"><svg width="23" height="20" viewBox="0 0 23 20" fill="none" stroke="#555" stroke-width="1.700"><path d="M1 1h21v18H1zM5 1v18M5 13h17M10 5h8v4h-8z"/></svg></i>
          <i><svg width="24" height="20" viewBox="0 0 24 20" fill="none" stroke="#555" stroke-width="1.700"><path d="M1 1h8v6H1zM14 1h8v6h-8zM1 13h8v6H1zM14 13h8v6h-8z"/></svg></i>
          <i><svg width="22" height="20" viewBox="0 0 22 20" fill="none" stroke="#555" stroke-width="1.700"><path d="M11 3C8 1 4 1 1 1v15c4 0 7 1 10 3 3-2 6-3 10-3V1c-3 0-7 0-10 2v16M3 5h6M3 9h6M3 13h6M13 5h6M13 9h6M13 13h6"/></svg></i>
          <i><svg width="22" height="20" viewBox="0 0 22 20" fill="none" stroke="#555" stroke-width="1.700"><path d="M0 2h22" stroke-width="3"/><path d="M3 3v9h16V3M11 12v7M6 19h10"/></svg></i>
          <i class="minus"></i>
        </div>
        <div class="ime">
          <svg width="30" height="30"><use href="#ulogo"/></svg>
          <b>中</b>
          <svg width="20" height="20" viewBox="0 0 20 20"><path d="M13 0c6 4 8 12 3 17S3 20 0 15c8 1 14-6 13-15z" fill="#3f7fc4"/></svg>
          <svg width="17" height="20" viewBox="0 0 17 20"><circle cx="5" cy="5" r="3.500" fill="none" stroke="#555" stroke-width="1.500"/><path d="M10 12c5-1 7 3 2 8l-2-1c2-2 2-3 0-4z" fill="#3f7fc4"/></svg>
          <svg width="27" height="19" viewBox="0 0 27 19"><rect width="27" height="19" fill="#3f7fc4"/><path d="M3 5h21M3 9.500h21" stroke="#fff" stroke-width="2" stroke-dasharray="3 1.500"/><path d="M6 14.500h15" stroke="#fff" stroke-width="2"/></svg>
          <svg width="18" height="20" viewBox="0 0 18 20"><circle cx="9" cy="5" r="5" fill="#3f7fc4"/><path d="M1 19c-2-6 2-8 8-8s10 2 8 8z" fill="#3f7fc4"/></svg>
          <svg width="22" height="20" viewBox="0 0 22 20"><path d="M3 18l10-10" stroke="#3f7fc4" stroke-width="5"/><path d="M18 0l-4 5 3 3 5-4c1 5-3 9-8 7s-5-10 4-11z" fill="#3f7fc4"/></svg>
        </div>
        <svg class="fit" width="21" height="20" viewBox="0 0 21 20" fill="none" stroke="#444" stroke-width="1.800"><path d="M1 1h19v18H1zM10.500 3v4M10.500 13v4M3 10h5M13 10h5M8 5l2.500-3L13 5M8 15l2.500 3 2.500-3M5 8l-2 2 2 2M16 8l2 2-2 2"/></svg>
      </div>
    </div>

    <div class="taskbar">
      <i><svg width="27" height="25" viewBox="0 0 27 25" fill="#fff"><path d="M0 4l11-2v10H0zM13 1.500L27 0v12H13zM0 13h11v10L0 21zM13 13h14v12l-14-2z"/></svg></i>
      <i><svg width="27" height="25" viewBox="0 0 27 25" fill="none" stroke="#ddd" stroke-width="2"><circle cx="17" cy="9" r="8"/><path d="M11 15L1 24"/></svg></i>
      <i><svg width="28" height="24" viewBox="0 0 28 24" fill="none" stroke="#ddd" stroke-width="2"><path d="M2 7h17v10H2zM1 0v3h19V0M1 24v-3h19v3M25 0v24"/><path d="M23 6h4" stroke-width="4"/></svg></i>
      <i><svg width="27" height="26" viewBox="0 0 27 26"><circle cx="13.500" cy="13" r="13" fill="#1a73c8"/><path d="M1 10C4-2 24-4 26.500 12c0 6-8 8-10 4 2-8-9-9-15.500-6z" fill="#46c07a"/><path d="M1 11c5-5 13-4 13 1-4 4-1 9 3 10-7 3-16-2-16-11z" fill="#2a9fe0"/><path d="M15 17c3 2 8 1 10-1-3 6-8 6-10 1z" fill="#15202a"/></svg></i>
      <i class="run"><svg width="26" height="26" viewBox="0 0 26 26"><circle cx="13" cy="13" r="13" fill="#ddb13a"/><path d="M2 6A13 13 0 0 1 24.500 7H13l-6 8z" fill="#d64a3a"/><path d="M2 6l6 10 5 3-2 7A13 13 0 0 1 2 6z" fill="#3f9a52"/><circle cx="13" cy="13" r="5.500" fill="#3b7fe0" stroke="#fff" stroke-width="1.600"/></svg></i>
      <i><svg width="26" height="26" viewBox="0 0 26 26"><circle cx="13" cy="13" r="13" fill="#e85040"/><path d="M13 13L3 5A13 13 0 0 1 19 1z" fill="#b964d8"/><path d="M13 13l6-12a13 13 0 0 1 7 13z" fill="#f06a6a"/><path d="M13 13l13 1a13 13 0 0 1-9 11z" fill="#f5a030"/><path d="M13 13l4 12A13 13 0 0 1 3 21z" fill="#8fc83a"/><path d="M13 13L3 21A13 13 0 0 1 3 5z" fill="#4aa8e8"/><circle cx="13" cy="13" r="3" fill="#fff"/></svg></i>
      <i class="run"><svg width="27" height="23" viewBox="0 0 27 23"><path d="M0 1h11l3 3h13v17H0z" fill="#e2a93c"/><path d="M2 6h23v4H2z" fill="#f6dc92"/><path d="M6 22V11h15v11h-4v-5h-7v5z" fill="#3c8fd0"/></svg></i>
      <i class="run"><b class="app p">P</b></i>
      <i class="run"><b class="app x"><svg width="18" height="16" viewBox="0 0 18 16" fill="none" stroke="#fff" stroke-width="3"><path d="M1 4l7 9M7 2l9 10M3 12l3-3M11 5l4-3"/></svg></b></i>
      <i class="run"><b class="app ij">IJ</b></i>
      <i class="run"><b class="app t">T</b></i>
      <i class="run front"><b class="app ppt"><span>P</span></b></i>
      <div class="tray">
        <span class="api">API</span>
        <span class="more">»</span>
        <i><svg width="20" height="11" viewBox="0 0 20 11" fill="none" stroke="#ddd" stroke-width="2"><path d="M1 10l9-9 9 9"/></svg></i>
        <i><svg width="22" height="22" viewBox="0 0 22 22" fill="#f3bdae"><circle cx="11" cy="4.500" r="4"/><circle cx="5" cy="7" r="4"/><circle cx="17" cy="7" r="4"/><circle cx="5" cy="15" r="4"/><circle cx="17" cy="15" r="4"/><circle cx="11" cy="18" r="4"/><circle cx="11" cy="11" r="5"/><path d="M7 12l7-2" stroke="#7d8fa8" stroke-width="2"/></svg></i>
        <i><svg width="18" height="26" viewBox="0 0 18 26"><rect x="4" y="0" width="10" height="18" rx="2" fill="#f2f2f2"/><path d="M1 13v8h16v-8M9 21v4M4 25h10" fill="none" stroke="#ccc" stroke-width="1.800"/></svg></i>
        <i><svg width="26" height="26" viewBox="0 0 26 26"><circle cx="13" cy="13" r="12.500" fill="#d9541e"/></svg></i>
        <i><svg width="26" height="18" viewBox="0 0 26 18" fill="none" stroke="#e6e6e6" stroke-width="1.600"><path d="M10 4h13v12H8v-4M25 8v5M1 2v5h6V2zM4 7v5h4"/><path d="M11 7h9v6h-9z" fill="#e6e6e6"/></svg></i>
        <i><svg width="26" height="22" viewBox="0 0 26 22" fill="none" stroke="#e6e6e6" stroke-width="1.600"><path d="M9 2h16v13H5v-5M13 15v5M8 20h11M1 1h6v6H1zM1 4h6"/></svg></i>
        <i><svg width="26" height="20" viewBox="0 0 26 20" fill="none" stroke="#ddd" stroke-width="1.700"><path d="M1 7h4l6-6v18l-6-6H1zM14 7c1 2 1 4 0 6M18 4c3 4 3 8 0 12"/><path d="M22 1c5 6 5 12 0 18" stroke="#666"/></svg></i>
        <i class="zh">中</i>
        <i class="sogou"><b>S</b></i>
        <span class="clock">14:49</span>
        <svg width="27" height="26" viewBox="0 0 27 26"><path d="M0 0h27v21H17l-4 5-4-5H0z" fill="#fff"/><path d="M4 6h19M4 11h19M4 16h12" stroke="#1a2026" stroke-width="2"/></svg>
      </div>
    </div>

    <!-- things floating above the window -->
    <div class="topbar"></div>
    <div class="account">song hk</div>
    <svg class="face" width="34" height="34" viewBox="0 0 34 34"><circle cx="17" cy="17" r="16" fill="#e3b62c"/><path d="M13 9v8M22 9v8M10 23c5 4 10 4 14 0" fill="none" stroke="#5d4310" stroke-width="2.500"/></svg>
    <svg class="winbtn" width="160" height="18" viewBox="0 0 160 18" fill="none" stroke="#f0c9b0" stroke-width="1.800"><path d="M1 1h19v14H1zM1 5h19M75 8h16M147 2h12v13h-12z"/></svg>
    <div class="brandmark">尚硅谷</div>
    <div class="bili">bilibili</div>
    <div class="slogan">学习使我快乐</div>
  </div>
</body>
</html>
```
FILE: styles.css
```css
/* page */
* {
  box-sizing: border-box;
}
body {
  margin: 0;
  background: #000;
  font-family: "Noto Sans", "Noto Sans CJK SC", sans-serif;
  font-size: 19px;
  color: #262626;
}
svg {
  display: block;
  flex: none;
}
i, em, u, s, cite {
  font-style: normal;
  text-decoration: none;
}
q::before, q::after {
  content: none;
}
.defs {
  position: absolute;
}
.screen {
  position: relative;
  width: 2133px;
  height: 1200px;
  margin-left: 266px;
  overflow: hidden;
}
.window {
  height: 1152px;
  border-left: 2px solid #3c8585;
  display: flex;
  flex-direction: column;
}
.chev {
  width: 9px;
  height: 5.500px;
}

/* title bar */
.titlebar {
  height: 53px;
  background: #bc5d2f;
  color: #fde3cf;
  display: flex;
  align-items: center;
}
.quick {
  width: 855px;
  padding: 0 0 2px 31px;
  display: grid;
  grid-template-columns: 46px 33px 28px 38px 35px 37px 10px;
  align-items: center;
}
.doc-name {
  flex: 1;
  padding-bottom: 2px;
  font-size: 18.5px;
  white-space: nowrap;
}
.doc-name, .tabs a {
  -webkit-text-stroke: .3px;
}
.close {
  margin: -5px 24px 0 0;
}

/* tabs */
.tabs {
  height: 47px;
  background: #bc5d2f;
  color: #fde3cf;
  display: flex;
  align-items: stretch;
  padding-left: 2px;
}
.tabs a {
  padding: 0 20.7px;
  line-height: 44px;
  white-space: nowrap;
}
.tabs .file {
  margin-right: 10px;
}
.tabs .active {
  background: #f4f3f2;
  color: #a5491f;
}
.bulb {
  margin: 11px 0 0 24px;
}
.tabs .tell {
  flex: 1;
}
.note {
  margin: 11px 20px 0 0;
}

/* ribbon */
.ribbon {
  height: 147px;
  background: #f3f3f3;
  border-bottom: 2px solid #cfcfcf;
  display: flex;
  font-size: 18.7px;
  line-height: 24px;
  white-space: nowrap;
}
.ribbon span {
  -webkit-text-stroke: .3px;
}
.group {
  position: relative;
  display: flex;
  flex-direction: column;
  background: linear-gradient(#aaa, #aaa) right 6px / 2px 134px no-repeat;
}
.tools {
  height: 116px;
  display: flex;
}
.group footer {
  display: flex;
  height: 28px;
  align-items: center;
  padding-right: 5px;
}
.group footer span {
  flex: 1;
  text-align: center;
  color: #262626;
}
.launch {
  width: 13px;
  height: 13px;
  margin-top: 8px;
  margin-left: 8px;
}
.off, .off .rows {
  color: #a6a6a6;
}
.big {
  display: flex;
  flex-direction: column;
  align-items: center;
}
.big > span {
  line-height: 25px;
}
.rows {
  display: flex;
  flex-direction: column;
  padding-top: 5px;
}
.rows > div {
  height: 36px;
  display: flex;
  align-items: center;
}
.rows > div > span:not(.ico) {
  margin-left: 5px;
}
.rows .chev {
  margin-left: 8px;
}
.ico {
  width: 25px;
  height: 24px;
}
.clipboard {
  width: 195px;
}
.clipboard .big {
  width: 50px;
  margin: 12px 0 0 20px;
}
.clipboard .big > span {
  margin-right: 5px;
}
.clipboard .big .chev {
  margin-top: 8px;
}
.clipboard .rows {
  margin-left: 9px;
}
.rows .far {
  margin-left: 17px;
}
.slides {
  width: 210px;
}
.slides .big {
  width: 92px;
  margin: 10px 0 0 7px;
}
.slides .big > svg {
  margin-bottom: 8px;
}
.two {
  display: flex;
  align-items: center;
}
.two .chev {
  margin-left: 8px;
}
.slides .rows {
  margin-left: 1px;
}
.slides footer, .edit footer {
  padding-right: 0;
}

/* font group */
.font {
  width: 462px;
}
.font .tools, .para-left {
  flex-direction: column;
  display: flex;
}
.row {
  display: grid;
  align-items: center;
}
.font-row1 {
  height: 35px;
  margin: 17px 0 0 14px;
  grid-template-columns: 235px 89px 39px 31px 14px 30px;
}
.font-row2 {
  height: 34px;
  margin: 14px 0 0 24px;
  grid-template-columns: 37px 38px 39px 30px 37px 33px 27px 32px 26px 13px 35px 30px 31px 10px;
}
.combo {
  height: 35px;
  border: 2px solid #c9c9c9;
  background: #e7e7e7;
  display: flex;
  align-items: center;
  justify-content: space-between;
}
.combo i {
  width: 20px;
  height: 31px;
  margin-left: auto;
  border-left: 1px solid #c9c9c9;
  display: flex;
  align-items: center;
  justify-content: center;
}
.combo.name {
  width: 231px;
}
.combo.size {
  width: 77px;
  padding-left: 3px;
  color: #b0b0b0;
}
.bar {
  width: 1px;
  height: 32px;
  background: #cfcfcf;
}
.font .row {
  color: #8f8f8f;
}
.grow {
  font-size: 24px;
}
.shrink {
  font-size: 20px;
}
.row sup {
  font-size: 14px;
  line-height: 10px;
}
.bold {
  font-weight: bold;
}
.ital {
  font-family: "Liberation Serif", serif;
  font-size: 21px;
  font-style: italic;
  font-weight: bold;
}
.und {
  font-weight: bold;
  text-decoration: underline;
  text-underline-offset: 3px;
}
.shad {
  font-weight: bold;
  text-shadow: 2px 2px 1px #bbb;
}
.strike {
  font-size: 15px;
  text-decoration: line-through;
}
.av {
  line-height: 18px;
  letter-spacing: -1px;
}
.mark {
  position: relative;
  font-size: 15px;
  line-height: 30px;
  height: 34px;
}
.mark svg {
  position: absolute;
  left: 0;
  top: 6px;
}
.fcol {
  font-size: 22px;
}

/* paragraph group */
.para {
  width: 507px;
}
.para-left {
  width: 292px;
}
.para-row1 {
  height: 35px;
  margin: 17px 0 0 18px;
  grid-template-columns: 35px 26px 35px 24px 12px 37px 37px 12px 33px 10px;
}
.para-row2 {
  height: 34px;
  margin: 14px 0 0 18px;
  grid-template-columns: 37px 39px 37px 36px 37px 13px 31px 10px;
}

/* drawing group */
.draw {
  width: 535px;
}
.gallery {
  width: 216px;
  height: 96px;
  margin: 10px 0 0 14px;
  background: #fff;
  border: 2px solid #c6c6c6;
  display: flex;
}
.shapes {
  flex: 1;
  padding: 0 0 0 1px;
  display: grid;
  grid-template-columns: repeat(6, 31.6px);
  grid-auto-rows: 31px;
  justify-items: center;
  align-items: center;
}
.shapes svg {
  width: 24px;
  height: 20px;
  fill: none;
  stroke: #555;
  stroke-width: 1.700;
}
.steps {
  width: 22px;
  border-left: 2px solid #c6c6c6;
  display: flex;
  flex-direction: column;
}
.steps i {
  flex: 1;
  display: flex;
  align-items: center;
  justify-content: center;
}
.steps i + i {
  border-top: 2px solid #c6c6c6;
}
.steps .dim {
  background: #e6e6e6;
}
.arrange {
  width: 44px;
  margin: 12px 0 0 15px;
}
.arrange > svg:first-child {
  margin-bottom: 5px;
}
.arrange .chev, .styles .chev {
  margin-top: 8px;
}
.styles {
  width: 76px;
  margin: 13px 0 0 14px;
}
.styles > svg:first-child {
  margin-bottom: 2px;
}
.draw .rows {
  margin-left: 8px;
}

/* editing group */
.edit {
  width: 133px;
  padding-left: 17px;
}
.edit footer {
  padding-right: 17px;
}
.abac {
  font-size: 16px;
  line-height: 12px;
  color: #36518c;
}
.abac em {
  font-size: 8px;
}
.rows .wide {
  margin-left: 17px;
}
.collapse {
  flex: 1;
  display: flex;
  justify-content: flex-end;
  align-items: flex-end;
  padding: 0 11px 6px 0;
}

/* slide list */
.main {
  flex: 1;
  min-height: 0;
  display: flex;
  background: #e6e6e6;
}
.outline {
  width: 224px;
  overflow: hidden;
}
.item {
  height: 107.8px;
  display: flex;
  font-size: 24px;
}
.item:first-child {
  margin-top: -9px;
}
.item > span {
  width: 55px;
  padding-left: 17px;
  line-height: 7px;
}
.thumb {
  width: 134px;
  height: 75px;
  background: #fff;
  outline: 1.500px solid #b5b5b5;
}
.current > span {
  color: #c8502a;
}
.current .thumb {
  outline: 5px solid #b4532a;
}
.t-head {
  font-size: 3.800px;
  font-weight: bold;
  fill: #333;
}
.t-cover {
  font-size: 11px;
  font-weight: bold;
  fill: #f0a035;
}
.t-author {
  font-size: 5.200px;
  font-weight: bold;
  fill: #1f6f6a;
}
.t-end {
  font-size: 9.200px;
  fill: #2a5f5c;
}

/* scroll bars */
.vscroll {
  display: flex;
  flex-direction: column;
  background: #dbdbdb;
}
.vscroll i {
  height: 23px;
  flex: none;
  background: #fff;
  border: 1.500px solid #a8a8a8;
  display: flex;
  align-items: center;
  justify-content: center;
}
.vscroll b {
  background: #fff;
  border: 1.500px solid #a8a8a8;
}
.outline-scroll {
  width: 23px;
  margin: 5px 6px 5px 0;
}
.outline-scroll b {
  flex: 1;
  margin-top: 36px;
}
.splitter {
  width: 3px;
  margin: 4px 0 5px;
  background: #d2d2d2;
}

/* editor */
.editor {
  flex: 1;
  min-width: 0;
  display: flex;
  flex-direction: column;
}
.stage {
  height: 817px;
  display: flex;
  justify-content: space-between;
  padding-left: 239px;
}
.slide {
  position: relative;
  width: 1377px;
  height: 774px;
  margin-top: 21px;
  background: #fff;
  outline: 2px solid #c4c4c4;
}
.diagram {
  width: 1377px;
  height: 774px;
}
.stage-scroll {
  width: 22px;
  margin-top: 5px;
}
.stage-scroll span {
  flex: 1;
}
.stage-scroll span b {
  display: block;
  height: 85px;
  margin-top: 423px;
}
.stage-scroll em {
  height: 31px;
  display: flex;
  align-items: center;
  justify-content: center;
  background: #e6e6e6;
}
.stage-scroll em:last-child {
  height: 58px;
  padding-bottom: 33px;
}
.notes {
  flex: 1;
  margin-left: 3px;
  border-top: 2px solid #bdbdbd;
  display: flex;
  justify-content: space-between;
}
.notes p {
  margin: 0 0 0 14px;
  font-size: 23px;
  line-height: 47px;
  color: #444;
}
.notes .vscroll {
  width: 22px;
  margin: 6px 0 4px;
  justify-content: space-between;
}
.notes .vscroll i {
  height: 20px;
}

/* slide content */
.s-title {
  font: bold 38px "Noto Sans CJK SC", sans-serif;
  fill: #3a3a3a;
}
.s-brand {
  font: 900 36px "Noto Sans CJK SC", sans-serif;
  fill: #215b58;
}
.s-text {
  font: 26.4px "Liberation Sans", sans-serif;
  fill: #222;
}
.heap-text {
  fill: #1c2430;
}
.s-text .one {
  font: 31px "Noto Sans", sans-serif;
}
.s-zone {
  font: 900 35px "Noto Sans CJK SC", sans-serif;
}
.stack {
  fill: #e8431f;
}
.heap {
  fill: #2b73f0;
}
.s-motto {
  font: italic 26px "Noto Sans CJK SC", sans-serif;
  fill: #d2d2d2;
}
.grid {
  fill: none;
  stroke: #1b2740;
  stroke-width: 2.600;
}
.refs {
  fill: none;
  stroke: #d8401f;
  stroke-width: 3;
}
.arrow {
  marker-end: url(#head);
}
.code {
  position: absolute;
  left: 28px;
  top: 213px;
  width: 426px;
  height: 301px;
  padding: 7px 0 0 11px;
  background: #d9d9d9;
  border: 2px solid #3c3c3c;
  font: 23.5px "Liberation Sans", "Noto Sans CJK SC", sans-serif;
  line-height: 41.1px;
  letter-spacing: -.22px;
  white-space: pre;
  color: #2b2b2b;
  -webkit-text-stroke: .3px;
}
.code s {
  display: inline-block;
  width: 26px;
}
.code u {
  color: #1f3fae;
}
.code em {
  color: #27667c;
}
.code q {
  color: #2b50c8;
}
.code cite {
  color: #1f6b4e;
}

/* status bar */
.status {
  height: 34px;
  background: #f3f3f3;
  border-top: 2px solid #c6c6c6;
  display: flex;
  align-items: center;
  font-size: 18.7px;
  white-space: nowrap;
}
.st-left {
  width: 1232px;
  padding: 0 0 4px 9px;
  display: grid;
  grid-template-columns: 233px 51px 110px 29px 130px;
  align-items: center;
}
.st-right {
  width: 336px;
  padding-bottom: 4px;
  display: grid;
  grid-template-columns: 26px 62px 29px 124px 27px 60px;
  align-items: center;
}
.views {
  display: flex;
  width: 282px;
}
.views i {
  width: 62px;
  height: 32px;
  padding-bottom: 3px;
  display: flex;
  align-items: center;
  justify-content: center;
}
.views .on {
  background: #c8c8c8;
}
.views .minus {
  width: 34px;
  background: linear-gradient(#333, #333) 11px 13px / 13px 2px no-repeat;
}
.ime {
  width: 232px;
  height: 32px;
  background: #eef6fd;
  border: 1px solid #bbb;
  display: flex;
  align-items: center;
  justify-content: space-between;
  padding: 0 12px 0 3px;
}
.ime b {
  margin-left: -4px;
  color: #3f7fc4;
  font-size: 24px;
  line-height: 26px;
  padding-bottom: 3px;
}
.fit {
  margin: 0 0 4px 22px;
}

/* taskbar */
.taskbar {
  height: 48px;
  background: #19232a;
  display: flex;
  color: #e4e4e4;
}
.taskbar > i {
  width: 58px;
  height: 48px;
  display: flex;
  align-items: center;
  justify-content: center;
  padding-bottom: 3px;
}
.taskbar > i:first-child {
  width: 53px;
}
.taskbar > i:nth-child(2) {
  width: 59px;
}
.taskbar > i:nth-child(3) {
  width: 53px;
}
.taskbar > i:nth-child(4) {
  width: 70px;
}
.taskbar > i:nth-child(5) {
  width: 47px;
}
.taskbar > i.run {
  background: linear-gradient(#8fc9ec, #8fc9ec) center bottom / 44px 5px no-repeat;
}
.taskbar > i.run:nth-child(5) {
  margin-right: 5px;
}
.taskbar > i.front {
  background-color: #4b5358;
  background-size: 58px 5px;
}
.app {
  width: 26px;
  height: 26px;
  display: flex;
  align-items: center;
  justify-content: center;
  font-size: 17px;
  color: #fff;
  border-radius: 4px;
}
.p {
  background: #2a76e8;
  font-size: 21px;
}
.x {
  background: #e8622e;
}
.ij {
  background: linear-gradient(#fff, #fff) 4px 17px / 9px 2px no-repeat #07080c;
  border: 2px solid #26489a;
  border-radius: 0;
  font: 14px "Liberation Mono", monospace;
  padding-bottom: 5px;
}
.t {
  width: 22px;
  background: #e6ebf2;
  color: #777;
  font: 18px "Liberation Serif", serif;
  border-radius: 1px;
}
.ppt {
  border-radius: 50%;
  background: #ea7d4c;
  justify-content: flex-start;
}
.ppt span {
  width: 16px;
  background: #c64a22;
  font-size: 13px;
  line-height: 17px;
  text-align: center;
}
.tray {
  margin-left: auto;
  width: 566px;
  display: grid;
  grid-template-columns: 48px 15px 37px 38px 38px 37px 38px 37px 38px 37px 52px 90px 27px;
  align-items: center;
  padding-bottom: 4px;
}
.api {
  color: #aab0b4;
  font-size: 18px;
}
.more {
  margin-left: -6px;
  font-size: 25px;
  line-height: 20px;
  padding-bottom: 18px;
}
.tray i {
  display: flex;
  justify-content: center;
}
.zh {
  font-size: 20px;
}
.sogou b {
  width: 25px;
  height: 24px;
  margin-left: 0;
  background: #e0602a;
  border-radius: 4px;
  color: #fff;
  font: 900 24px/24px "Liberation Sans", sans-serif;
  text-align: center;
  transform: rotate(-8deg);
}
.clock {
  padding-left: 13px;
  font-size: 19px;
}

/* overlays */
.topbar {
  position: absolute;
  left: 1194px;
  top: 1px;
  width: 817px;
  height: 5px;
  background: #000;
  border: 1px solid #f4e6da;
  border-left-width: 0;
}
.account {
  position: absolute;
  left: 1701px;
  top: 11px;
  color: #f6d9c4;
  font-size: 19px;
}
.face {
  position: absolute;
  left: 1793px;
  top: 7px;
}
.winbtn {
  position: absolute;
  left: 1874px;
  top: 15px;
}
.brandmark {
  position: absolute;
  left: 1802px;
  top: 51px;
  font-size: 41px;
  line-height: 60px;
  font-weight: 500;
  color: #f1cdb9;
}
.bili {
  position: absolute;
  left: 1946px;
  top: 35px;
  font: bold 50px/76px "Open Sans", sans-serif;
  letter-spacing: -1.500px;
  color: #efc8b2;
  transform: rotate(3deg) scale(1, 1.3);
}
.slogan {
  position: absolute;
  left: 1685px;
  top: -1px;
  font: bold 66px/84px "Noto Sans CJK SC", sans-serif;
  color: #f0dfd8;
  -webkit-text-stroke: 4px #1e1512;
  paint-order: stroke fill;
  white-space: nowrap;
}
```
